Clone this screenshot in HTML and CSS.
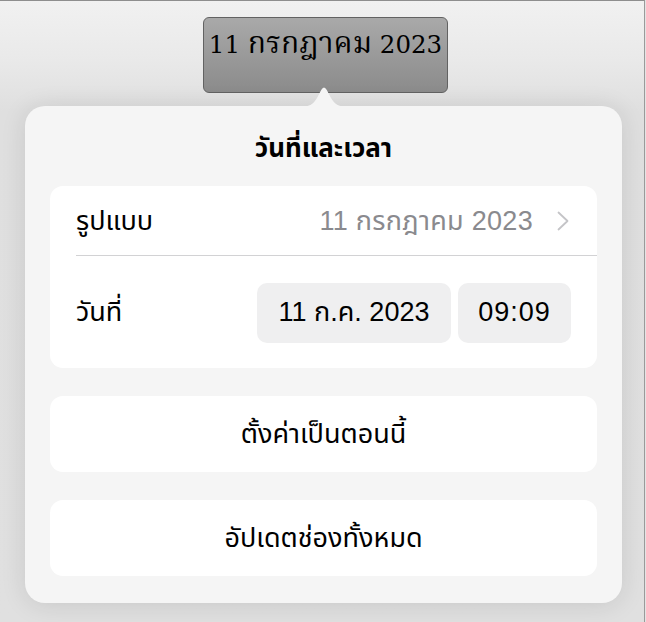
FILE: index.html
```html
<!DOCTYPE html>
<html lang="th">
<head>
<meta charset="utf-8">
<title>วันที่และเวลา</title>
<link rel="stylesheet" href="styles.css">
</head>
<body>
<div class="stage">
  <div class="tag"><span class="tag-text">11 <span class="tag-thai">กรกฎาคม</span> 2023</span></div>
  <div class="popover">
    <svg class="arrow" width="48" height="22" viewBox="0 0 48 22" aria-hidden="true">
      <path d="M0 22 C9 22 13 19.5 17 13 L21.2 5 Q24 0 26.8 5 L31 13 C35 19.5 39 22 48 22 Z" fill="#f5f5f5"/>
    </svg>
    <h1 class="title">วันที่และเวลา</h1>
    <div class="card">
      <div class="row row-format">
        <span class="label">รูปแบบ</span>
        <span class="value">
          <span class="value-text">11 กรกฎาคม 2023</span>
          <svg class="chevron" width="12" height="20" viewBox="0 0 12 20" aria-hidden="true">
            <path d="M1.5 1.5 L10.5 10 L1.5 18.5" fill="none" stroke="#c4c4c7" stroke-width="1.8" stroke-linecap="round" stroke-linejoin="round"/>
          </svg>
        </span>
      </div>
      <div class="row row-date">
        <span class="label">วันที่</span>
        <div class="pills">
          <span class="pill pill-date">11 ก.ค. 2023</span>
          <span class="pill pill-time">09:09</span>
        </div>
      </div>
    </div>
    <div class="card button">ตั้งค่าเป็นตอนนี้</div>
    <div class="card button">อัปเดตช่องทั้งหมด</div>
  </div>
</div>
</body>
</html>
```
FILE: styles.css
```css
html, body {
  margin: 0;
  padding: 0;
}
body {
  width: 646px;
  height: 622px;
  overflow: hidden;
  background: #e4e4e4;
  font-family: "Liberation Sans", "Noto Sans Thai", "Noto Sans", sans-serif;
  color: #000;
}
.stage {
  box-sizing: border-box;
  width: 645px;
  height: 622px;
  border-top: 1px solid #8e8e8e;
  border-right: 1px solid #9a9a9a;
  background: linear-gradient(180deg, #f1f1f1 0px, #e9e9e9 60px, #dfdfdf 110px, #e0e0e0 622px);
  display: flex;
  flex-direction: column;
  align-items: flex-start;
}
.tag {
  box-sizing: border-box;
  margin: 16px 0 0 203px;
  width: 245px;
  height: 76px;
  border: 1px solid #626262;
  border-radius: 6px;
  background: linear-gradient(180deg, #a9a9a9 0%, #9a9a9a 50%, #8b8b8b 100%);
  text-align: center;
  padding-top: 12px;
}
.tag-text {
  font-family: "DejaVu Serif", "Noto Serif Thai", "Noto Sans Thai", serif;
  font-size: 24.5px;
  line-height: 30px;
  color: #000;
  white-space: nowrap;
}
.tag-thai {
  font-family: "Noto Serif Thai", "Noto Sans Thai", serif;
  font-size: 30px;
}
.popover {
  position: relative;
  box-sizing: border-box;
  margin: 13px 0 0 25px;
  width: 597px;
  height: 497px;
  background: #f5f5f5;
  border-radius: 20px;
  box-shadow: 0 2px 26px rgba(0, 0, 0, 0.11);
  padding: 26px 25px 0;
  display: flex;
  flex-direction: column;
}
.arrow {
  position: absolute;
  top: -21px;
  left: 275px;
}
.title {
  margin: 0;
  font-size: 26px;
  font-weight: 700;
  line-height: 32px;
  height: 54px;
  text-align: center;
  color: #000;
}
.card {
  background: #fff;
  border-radius: 13px;
}
.row {
  display: flex;
  align-items: center;
  justify-content: space-between;
  padding: 0 26px;
  font-size: 27px;
}
.row-format {
  height: 70px;
  box-sizing: border-box;
  padding-right: 28px;
  position: relative;
}
.row-format::after {
  content: "";
  position: absolute;
  left: 26px;
  right: 0;
  bottom: 0;
  height: 1px;
  background: #d2d2d4;
}
.row-date {
  height: 112px;
  padding-top: 1px;
  box-sizing: border-box;
}
.label {
  color: #000;
}
.value {
  display: flex;
  align-items: center;
  gap: 24px;
  color: #8a8a8e;
}
.value-text {
  letter-spacing: 0.3px;
}
.chevron {
  display: block;
}
.pills {
  display: flex;
  gap: 7px;
}
.pill {
  display: flex;
  align-items: center;
  justify-content: center;
  height: 60px;
  border-radius: 10px;
  background: #efeff0;
  font-size: 27px;
  color: #000;
}
.pill-date {
  width: 194px;
}
.pill-time {
  width: 113px;
  letter-spacing: 1px;
}
.button {
  margin-top: 28px;
  height: 76px;
  display: flex;
  align-items: center;
  justify-content: center;
  font-size: 27px;
  color: #000;
}
```
